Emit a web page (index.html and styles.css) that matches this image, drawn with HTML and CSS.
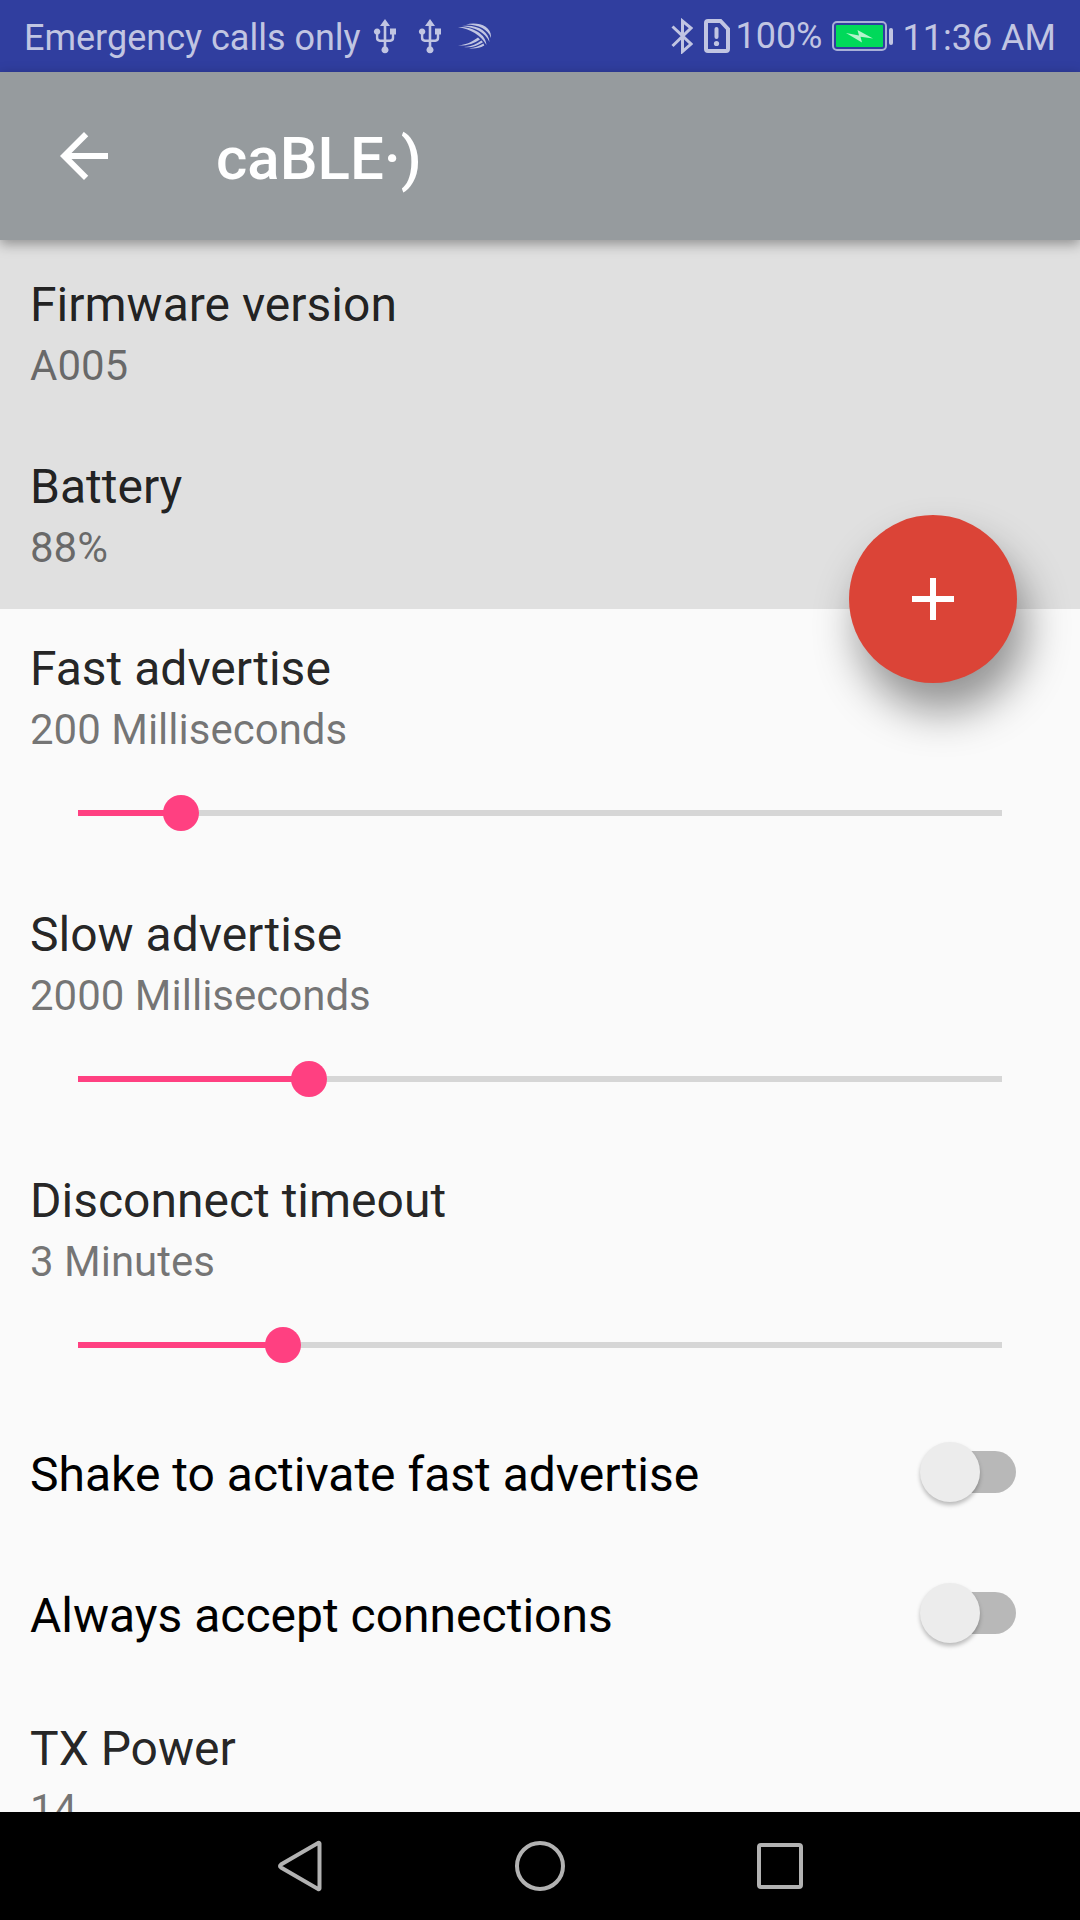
FILE: index.html
```html
<!DOCTYPE html>
<html lang="en">
<head>
<meta charset="utf-8">
<meta name="viewport" content="width=device-width, initial-scale=1">
<title>caBLE·)</title>
<link rel="stylesheet" href="styles.css">
</head>
<body>
<div class="status-bar">
  <div class="status-group">
    <span class="status-text">Emergency calls only</span>
    <svg class="usb" viewBox="0 0 24 36" aria-hidden="true">
      <path d="M12 1l5 7h-3.700v13.600h3.700q1.800 0 1.800-2v-3h-1.800v-6h6v6h-1.800v3.500q0 3.800-3.800 3.800h-4.100v4.700a3.500 3.500 0 1 1-2.600 0v-4.700h-4q-3.800 0-3.800-3.800v-3.500a3.200 3.200 0 1 1 2.400 0v3q0 2 1.800 2h3.600V8H7z"/>
    </svg>
    <svg class="usb usb-second" viewBox="0 0 24 36" aria-hidden="true">
      <path d="M12 1l5 7h-3.700v13.600h3.700q1.800 0 1.800-2v-3h-1.800v-6h6v6h-1.800v3.500q0 3.800-3.800 3.800h-4.100v4.700a3.500 3.500 0 1 1-2.600 0v-4.700h-4q-3.800 0-3.800-3.800v-3.500a3.200 3.200 0 1 1 2.400 0v3q0 2 1.800 2h3.600V8H7z"/>
    </svg>
    <svg class="swift" viewBox="0 0 34 26" aria-hidden="true">
      <path d="M8 1.500C20-1.500 34 3 33 15C30 6 21 2 8 1.500zM4 3C19 1 31 8 31.500 19C27 9 17 4.500 4 3zM0 4C15 3.500 28 11 28.500 22C23 12 12 6 0 4zM0 22.500C10 21.500 15 18 20 14.500L22 16.500C16 20.500 9 23 0 22.500zM6 24C14 23.500 19 20.500 23.500 17.500L25 19.200C19 23 13 25 6 24zM11 25.200C17 25 21 22.800 25.500 20.500L26.300 22.500C21 25.500 16 26 11 25.200z"/>
    </svg>
  </div>
  <div class="status-group">
    <svg class="bluetooth" viewBox="0 0 22 36" aria-hidden="true">
      <path d="M1.500 8.500L20 26L11.500 33.500V3L20 10L1.500 28"/>
    </svg>
    <svg class="sim" viewBox="0 0 26 34" aria-hidden="true">
      <path d="M4 2H16.500L24 10V30Q24 32 22 32H4Q2 32 2 30V4Q2 2 4 2z" class="line"/>
      <path d="M12.500 10V18" class="mark"/><circle cx="12.500" cy="24.500" r="2.600"/>
    </svg>
    <span class="battery-level">100%</span>
    <svg class="battery" viewBox="0 0 62 30" aria-hidden="true">
      <rect x="1" y="1" width="53" height="28" rx="4" class="case"/>
      <rect x="4" y="4" width="47" height="22" rx="1" class="charge"/>
      <rect x="57" y="7" width="4" height="17" rx="2" class="nub"/>
      <path d="M14 12L27 14.500L25.500 9L41 17.500L28.500 15.800L30 21.500z" class="bolt"/>
    </svg>
    <span class="status-text clock">11:36 AM</span>
  </div>
</div>

<header class="toolbar">
  <button class="icon-button" type="button" aria-label="Back">
    <svg viewBox="0 0 24 24" aria-hidden="true"><path d="M20 11H7.830l5.590-5.590L12 4l-8 8 8 8 1.410-1.410L7.830 13H20z"/></svg>
  </button>
  <h1 class="toolbar-title">caBLE·)</h1>
</header>

<main class="content">
  <section class="device-info">
    <div>
      <h2 class="item-title">Firmware version</h2>
      <p class="item-value">A005</p>
    </div>
    <div>
      <h2 class="item-title">Battery</h2>
      <p class="item-value">88%</p>
    </div>
    <button class="fab" type="button" aria-label="Add">
      <svg viewBox="0 0 24 24" aria-hidden="true"><path d="M19 13h-6v6h-2v-6H5v-2h6V5h2v6h6z"/></svg>
    </button>
  </section>

  <section class="settings">
    <div class="slider-item">
      <label class="item-title" for="fast">Fast advertise</label>
      <output class="item-value" for="fast">200 Milliseconds</output>
      <input class="slider" id="fast" type="range" min="100" max="1000" step="100" value="200" style="--fill: 0.111">
    </div>
    <div class="slider-item">
      <label class="item-title" for="slow">Slow advertise</label>
      <output class="item-value" for="slow">2000 Milliseconds</output>
      <input class="slider" id="slow" type="range" min="1000" max="5000" step="500" value="2000" style="--fill: 0.25">
    </div>
    <div class="slider-item">
      <label class="item-title" for="timeout">Disconnect timeout</label>
      <output class="item-value" for="timeout">3 Minutes</output>
      <input class="slider" id="timeout" type="range" min="1" max="10" value="3" style="--fill: 0.222">
    </div>
  </section>

  <section class="toggles">
    <label class="toggle-row">
      <span>Shake to activate fast advertise</span>
      <input class="switch" type="checkbox" role="switch">
    </label>
    <label class="toggle-row">
      <span>Always accept connections</span>
      <input class="switch" type="checkbox" role="switch">
    </label>
  </section>

  <section class="power">
    <h2 class="item-title">TX Power</h2>
    <p class="item-value">14</p>
  </section>
</main>

<nav class="nav-bar" aria-label="System">
  <button class="nav-button" type="button" aria-label="Back">
    <svg viewBox="0 0 54 54" aria-hidden="true"><path d="M46.500 4.500V49.500Q46.500 50.500 45 50L8 28.500Q6 27 8 25.500L45 4Q46.500 3.500 46.500 4.500z"/></svg>
  </button>
  <button class="nav-button" type="button" aria-label="Home">
    <svg viewBox="0 0 54 54" aria-hidden="true"><circle cx="27" cy="27" r="23"/></svg>
  </button>
  <button class="nav-button" type="button" aria-label="Recent apps">
    <svg viewBox="0 0 54 54" aria-hidden="true"><rect x="6" y="6" width="42" height="42" rx="2"/></svg>
  </button>
</nav>
</body>
</html>
```

FILE: styles.css
```css
* {
  box-sizing: border-box;
}

body {
  margin: 0;
  height: 100vh;
  display: flex;
  flex-direction: column;
  background: #fafafa;
  font-family: Roboto, "Noto Sans", sans-serif;
}

h1, h2, p {
  margin: 0;
  font-weight: 400;
}

button {
  padding: 0;
  border: 0;
  background: none;
  display: grid;
  place-items: center;
}

svg {
  display: block;
  flex: none;
}

/* Status bar */
.status-bar {
  flex: none;
  height: 72px;
  padding: 0 24px;
  display: flex;
  justify-content: space-between;
  background: #303e9f;
  color: #c1c5e2;
  font-size: 36px;
  line-height: 42px;
  white-space: nowrap;
}

.status-group {
  display: flex;
  align-items: center;
}

.status-text {
  padding-top: 3px;
}

.status-group svg {
  fill: #c1c5e2;
}

.usb {
  width: 24px;
  height: 36px;
  margin-left: 12px;
}

.usb-second {
  margin-left: 21px;
}

.swift {
  width: 34px;
  height: 26px;
  margin-left: 16px;
}

.status-group .bluetooth {
  width: 22px;
  height: 36px;
  margin-right: 11px;
  fill: none;
  stroke: #c1c5e2;
  stroke-width: 3;
}

.sim {
  width: 26px;
  height: 34px;
  margin-right: 5px;
}

.sim .line,
.sim .mark {
  fill: none;
  stroke: #c1c5e2;
  stroke-width: 4;
}

.sim .mark {
  stroke-linecap: round;
}

.battery {
  width: 62px;
  height: 30px;
  margin: 0 9px 0 9px;
}

.battery .case {
  fill: none;
  stroke: #a9b0d8;
  stroke-width: 2;
}

.battery .charge {
  fill: #00d95a;
}

.battery .bolt {
  fill: #b4f4cd;
}

/* Toolbar */
.toolbar {
  flex: none;
  position: relative;
  z-index: 2;
  height: 168px;
  padding: 0 48px;
  display: flex;
  align-items: center;
  gap: 96px;
  background: #969b9e;
  color: #fff;
  box-shadow: 0 4px 12px rgba(0, 0, 0, 0.36);
}

.icon-button svg {
  width: 72px;
  height: 72px;
  fill: #fff;
}

.toolbar-title {
  padding-top: 6px;
  font-size: 60px;
  line-height: 72px;
  font-weight: 500;
}

/* Scrolling content */
.content {
  flex: 1;
  min-height: 0;
  overflow-y: auto;
  scrollbar-width: none;
}

.item-title,
.toggle-row {
  font-size: 48px;
  line-height: 64px;
}

.item-title {
  display: block;
  color: rgba(0, 0, 0, 0.87);
}

.item-value {
  display: block;
  font-size: 42px;
  line-height: 58px;
  color: rgba(0, 0, 0, 0.54);
}

.device-info {
  position: relative;
  padding: 33px 30px 32px;
  display: flex;
  flex-direction: column;
  gap: 60px;
  background: #e0e0e0;
}

.fab {
  position: absolute;
  right: 63px;
  bottom: -74px;
  width: 168px;
  height: 168px;
  border-radius: 50%;
  background: #db4437;
  box-shadow: 9px 28px 44px rgba(0, 0, 0, 0.42);
}

.fab svg {
  width: 72px;
  height: 72px;
  fill: #fff;
}

.settings {
  padding: 28px 30px 0;
  display: flex;
  flex-direction: column;
  gap: 36px;
}

.slider-item {
  display: flex;
  flex-direction: column;
}

.slider {
  --stop: calc(18px + (100% - 36px) * var(--fill));
  appearance: none;
  height: 108px;
  margin: 0 30px;
  background: none;
}

.slider::-webkit-slider-runnable-track {
  height: 36px;
  background:
    linear-gradient(to right,
      transparent 18px,
      #ff4081 18px var(--stop),
      #d6d6d6 var(--stop) calc(100% - 18px),
      transparent calc(100% - 18px))
    center / 100% 6px no-repeat;
}

.slider::-webkit-slider-thumb {
  appearance: none;
  width: 36px;
  height: 36px;
  border-radius: 50%;
  background: #ff4081;
}

/* Switches */
.toggles {
  padding: 5px 64px 31px 30px;
}

.toggle-row {
  height: 141px;
  display: flex;
  align-items: center;
  justify-content: space-between;
  color: #000;
}

.switch {
  appearance: none;
  position: relative;
  flex: none;
  width: 96px;
  height: 66px;
  margin: 0;
}

.switch::before {
  content: "";
  position: absolute;
  top: 9px;
  right: 0;
  width: 90px;
  height: 42px;
  border-radius: 21px;
  background: #b8b8b8;
}

.switch::after {
  content: "";
  position: absolute;
  top: 0;
  left: 0;
  width: 60px;
  height: 60px;
  border-radius: 50%;
  background: #ececec;
  box-shadow: 0 3px 4px rgba(0, 0, 0, 0.26);
}

.switch:checked::before {
  background: #ff9fbf;
}

.switch:checked::after {
  left: 36px;
  background: #ff4081;
}

.power {
  padding: 0 30px 60px;
}

/* System navigation */
.nav-bar {
  flex: none;
  height: 108px;
  display: flex;
  justify-content: center;
  background: #000;
}

.nav-button {
  width: 240px;
}

.nav-button svg {
  width: 54px;
  height: 54px;
  fill: none;
  stroke: #b2b2b2;
  stroke-width: 4;
}
```
